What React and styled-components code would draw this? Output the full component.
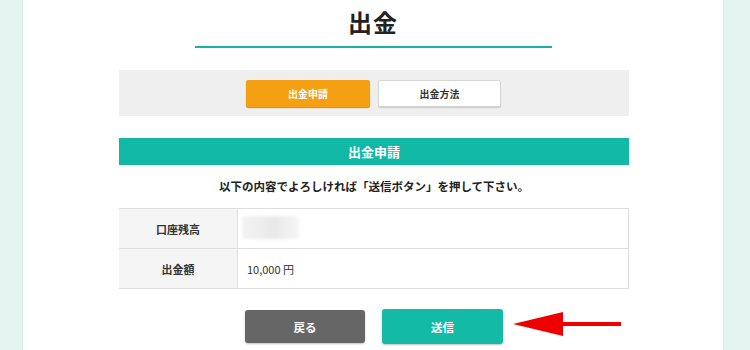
import React from "react";
import styled, { createGlobalStyle } from "styled-components";

const Global = createGlobalStyle`
  html, body { margin: 0; padding: 0; background: #e4f5f1; }
  body { font-family: "Noto Sans CJK JP", "Noto Sans", sans-serif; color: #333; }
`;

const Page = styled.div`
  display: flex;
  width: 750px;
  height: 350px;
  overflow: hidden;
  background: #e4f5f1;
`;

const Side = styled.div`
  width: ${(p) => p.$w}px;
  flex: none;
  background: #e4f5f1;
`;

const Main = styled.main`
  width: 700px;
  flex: none;
  background: #fff;
  border-left: 1px solid #d8ebe6;
  border-right: 1px solid #d8ebe6;
  display: flex;
  flex-direction: column;
  align-items: center;
  padding-top: 7px;
`;

const Title = styled.h1`
  margin: 0;
  font-size: 24px;
  line-height: 30px;
  font-weight: 700;
  color: #222;
  letter-spacing: 1px;
`;

const Underline = styled.div`
  width: 357px;
  height: 2px;
  margin-top: 9px;
  background: #17b1a6;
`;

const Column = styled.div`
  width: 510px;
  margin-left: 2px;
  display: flex;
  flex-direction: column;
  align-items: stretch;
`;

const TabBox = styled.div`
  margin-top: 22px;
  height: 46px;
  background: #efefef;
  display: flex;
  justify-content: center;
  align-items: center;
  gap: 8px;
  padding-right: 1px;
`;

const Tab = styled.div`
  width: ${(p) => (p.$active ? 124 : 123)}px;
  height: 27px;
  box-sizing: border-box;
  border-radius: 2px;
  display: flex;
  align-items: center;
  justify-content: center;
  font-size: 10px;
  font-weight: 700;
  background: ${(p) => (p.$active ? "#f5a013" : "#fff")};
  color: ${(p) => (p.$active ? "#fff" : "#333")};
  border: ${(p) => (p.$active ? "none" : "1px solid #d6d6d6")};
  box-shadow: ${(p) => (p.$active ? "0 1px 1px #d48a10" : "0 1px 1px #c8c8c8")};
`;

const Heading = styled.div`
  margin-top: 22px;
  height: 27px;
  background: #12b8a6;
  color: #fff;
  font-size: 13px;
  font-weight: 700;
  display: flex;
  align-items: center;
  justify-content: center;
`;

const Note = styled.p`
  margin: 12px 0 13px;
  font-size: 11.5px;
  line-height: 18px;
  font-weight: 700;
  text-align: center;
  color: #222;
`;

const Table = styled.div`
  display: grid;
  grid-template-columns: 119px 1fr;
  border-top: 1px solid #dedede;
  border-right: 1px solid #dedede;
`;

const Label = styled.div`
  height: 39px;
  background: #f5f5f5;
  border-bottom: 1px solid #dedede;
  border-right: 1px solid #e2e2e2;
  display: flex;
  align-items: center;
  justify-content: center;
  font-size: 11px;
  font-weight: 700;
  color: #333;
`;

const Value = styled.div`
  height: 39px;
  border-bottom: 1px solid #dedede;
  display: flex;
  align-items: center;
  padding-left: 9px;
  font-size: 11px;
  color: #333;
`;

const Blur = styled.div`
  width: 57px;
  height: 23px;
  margin-left: -5px;
  margin-top: -2px;
  background: linear-gradient(90deg, #f3f3f3 0%, #eeeeee 30%, #e8e8e8 55%, #f0f0f0 80%, #f6f6f6 100%);
  filter: blur(1.5px);
`;

const Actions = styled.div`
  position: relative;
  margin-top: 20px;
  display: flex;
  justify-content: center;
  align-items: center;
  gap: 17px;
`;

const Button = styled.div`
  width: ${(p) => p.$w}px;
  height: ${(p) => p.$h}px;
  border-radius: 3px;
  display: flex;
  align-items: center;
  justify-content: center;
  font-size: 11.5px;
  font-weight: 700;
  color: #fff;
  background: ${(p) => p.$bg};
  box-shadow: 0 1px 2px rgba(0, 0, 0, 0.25);
`;

const Arrow = styled.svg`
  position: absolute;
  left: 394px;
  top: 3px;
`;

export default function App() {
  return (
    <>
      <Global />
      <Page>
        <Side $w={22} />
        <Main>
          <Title>出金</Title>
          <Underline />
          <Column>
            <TabBox>
              <Tab $active>出金申請</Tab>
              <Tab>出金方法</Tab>
            </TabBox>
            <Heading>出金申請</Heading>
            <Note>以下の内容でよろしければ「送信ボタン」を押して下さい。</Note>
            <Table>
              <Label>口座残高</Label>
              <Value>
                <Blur />
              </Value>
              <Label>出金額</Label>
              <Value>10,000 円</Value>
            </Table>
            <Actions>
              <Button $w={120} $h={33} $bg="#666666">戻る</Button>
              <Button $w={121} $h={35} $bg="#13bba7">送信</Button>
              <Arrow width="110" height="26" viewBox="0 0 110 26">
                <polygon points="0,12 50,0 50,24" fill="#ee0000" />
                <rect x="48" y="10" width="60" height="4" fill="#ee0000" />
              </Arrow>
            </Actions>
          </Column>
        </Main>
        <Side $w={26} />
      </Page>
    </>
  );
}
